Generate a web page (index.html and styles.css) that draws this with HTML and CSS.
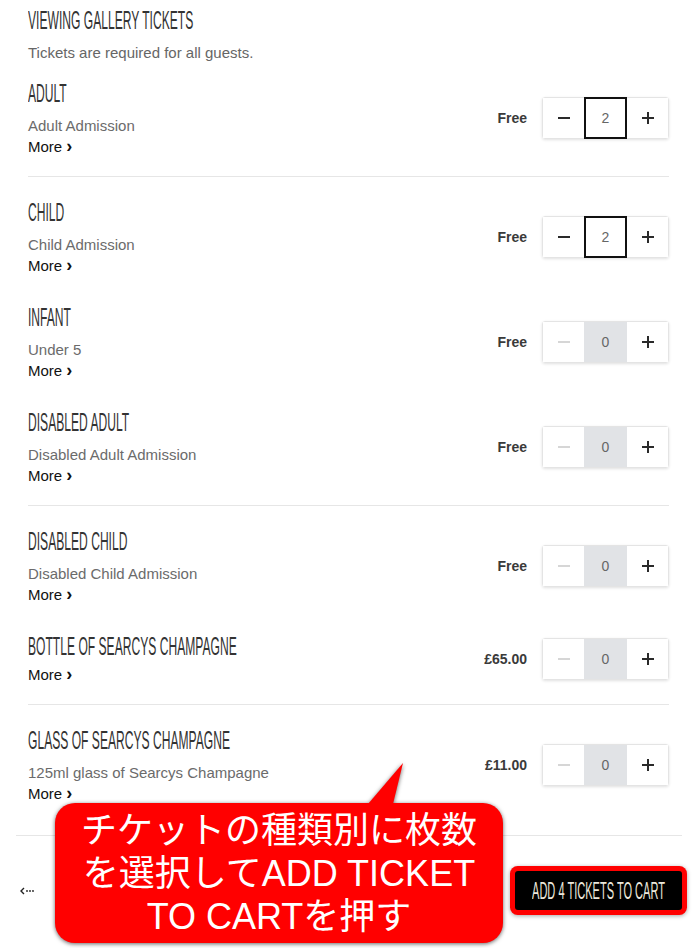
FILE: index.html
```html
<!DOCTYPE html>
<html lang="en">
<head>
    <meta charset="UTF-8">
    <meta name="viewport" content="width=device-width, initial-scale=1.0">
    <title>Viewing Gallery Tickets</title>
    <link rel="stylesheet" href="styles.css">
</head>
<body>
    <div class="page">
        <div class="tickets">
            <h1 class="title"><span>VIEWING GALLERY TICKETS</span></h1>
            <p class="intro">Tickets are required for all guests.</p>

            <div class="item">
                <div class="info">
                    <h2 class="title"><span>ADULT</span></h2>
                    <p class="desc">Adult Admission</p>
                    <a class="more">More <b>&#8250;</b></a>
                </div>
                <span class="price">Free</span>
                <div class="stepper">
                    <button class="step"><svg width="12" height="12" viewBox="0 0 12 12"><path d="M0 6h12" stroke="currentColor" stroke-width="2"/></svg></button>
                    <span class="count active">2</span>
                    <button class="step"><svg width="12" height="12" viewBox="0 0 12 12"><path d="M0 6h12M6 0v12" stroke="currentColor" stroke-width="2"/></svg></button>
                </div>
            </div>
            <hr class="divider">

            <div class="item">
                <div class="info">
                    <h2 class="title"><span>CHILD</span></h2>
                    <p class="desc">Child Admission</p>
                    <a class="more">More <b>&#8250;</b></a>
                </div>
                <span class="price">Free</span>
                <div class="stepper">
                    <button class="step"><svg width="12" height="12" viewBox="0 0 12 12"><path d="M0 6h12" stroke="currentColor" stroke-width="2"/></svg></button>
                    <span class="count active">2</span>
                    <button class="step"><svg width="12" height="12" viewBox="0 0 12 12"><path d="M0 6h12M6 0v12" stroke="currentColor" stroke-width="2"/></svg></button>
                </div>
            </div>

            <div class="item">
                <div class="info">
                    <h2 class="title"><span>INFANT</span></h2>
                    <p class="desc">Under 5</p>
                    <a class="more">More <b>&#8250;</b></a>
                </div>
                <span class="price">Free</span>
                <div class="stepper">
                    <button class="step off"><svg width="12" height="12" viewBox="0 0 12 12"><path d="M0 6h12" stroke="currentColor" stroke-width="2"/></svg></button>
                    <span class="count">0</span>
                    <button class="step"><svg width="12" height="12" viewBox="0 0 12 12"><path d="M0 6h12M6 0v12" stroke="currentColor" stroke-width="2"/></svg></button>
                </div>
            </div>

            <div class="item">
                <div class="info">
                    <h2 class="title"><span>DISABLED ADULT</span></h2>
                    <p class="desc">Disabled Adult Admission</p>
                    <a class="more">More <b>&#8250;</b></a>
                </div>
                <span class="price">Free</span>
                <div class="stepper">
                    <button class="step off"><svg width="12" height="12" viewBox="0 0 12 12"><path d="M0 6h12" stroke="currentColor" stroke-width="2"/></svg></button>
                    <span class="count">0</span>
                    <button class="step"><svg width="12" height="12" viewBox="0 0 12 12"><path d="M0 6h12M6 0v12" stroke="currentColor" stroke-width="2"/></svg></button>
                </div>
            </div>
            <hr class="divider">

            <div class="item">
                <div class="info">
                    <h2 class="title"><span>DISABLED CHILD</span></h2>
                    <p class="desc">Disabled Child Admission</p>
                    <a class="more">More <b>&#8250;</b></a>
                </div>
                <span class="price">Free</span>
                <div class="stepper">
                    <button class="step off"><svg width="12" height="12" viewBox="0 0 12 12"><path d="M0 6h12" stroke="currentColor" stroke-width="2"/></svg></button>
                    <span class="count">0</span>
                    <button class="step"><svg width="12" height="12" viewBox="0 0 12 12"><path d="M0 6h12M6 0v12" stroke="currentColor" stroke-width="2"/></svg></button>
                </div>
            </div>

            <div class="item">
                <div class="info">
                    <h2 class="title"><span>BOTTLE OF SEARCYS CHAMPAGNE</span></h2>
                    <a class="more short">More <b>&#8250;</b></a>
                </div>
                <span class="price">£65.00</span>
                <div class="stepper">
                    <button class="step off"><svg width="12" height="12" viewBox="0 0 12 12"><path d="M0 6h12" stroke="currentColor" stroke-width="2"/></svg></button>
                    <span class="count">0</span>
                    <button class="step"><svg width="12" height="12" viewBox="0 0 12 12"><path d="M0 6h12M6 0v12" stroke="currentColor" stroke-width="2"/></svg></button>
                </div>
            </div>
            <hr class="divider">

            <div class="item">
                <div class="info">
                    <h2 class="title"><span>GLASS OF SEARCYS CHAMPAGNE</span></h2>
                    <p class="desc">125ml glass of Searcys Champagne</p>
                    <a class="more">More <b>&#8250;</b></a>
                </div>
                <span class="price">£11.00</span>
                <div class="stepper">
                    <button class="step off"><svg width="12" height="12" viewBox="0 0 12 12"><path d="M0 6h12" stroke="currentColor" stroke-width="2"/></svg></button>
                    <span class="count">0</span>
                    <button class="step"><svg width="12" height="12" viewBox="0 0 12 12"><path d="M0 6h12M6 0v12" stroke="currentColor" stroke-width="2"/></svg></button>
                </div>
            </div>
        </div>

        <div class="footer">
            <a class="back">
                <svg width="16" height="8" viewBox="0 0 16 8"><path d="M4 1L1 4l3 3" fill="none" stroke="#222" stroke-width="1.4"/><circle cx="7" cy="4" r="0.9" fill="#222"/><circle cx="10" cy="4" r="0.9" fill="#222"/><circle cx="13" cy="4" r="0.9" fill="#222"/></svg>
            </a>
            <button class="cart"><span>ADD 4 TICKETS TO CART</span></button>
        </div>

        <div class="callout">
            <span class="line">チケットの種類別に枚数</span>
            <span class="line">を選択してADD TICKET</span>
            <span class="line">TO CARTを押す</span>
        </div>
    </div>
</body>
</html>
```

FILE: styles.css
```css
/* Global Styling */
body {
    margin: 0;
    background-color: #fff;
    font-family: "Liberation Sans", Arial, sans-serif;
    color: #333;
    overflow: hidden;
}

.page {
    position: relative;
    width: 700px;
    height: 948px;
}

/* Ticket list */
.tickets {
    padding: 6px 31px 0 28px;
}

.title {
    margin: 0;
    font-size: 26px;
    font-weight: normal;
    line-height: 28px;
    color: #333;
    white-space: nowrap;
}

.title span {
    display: inline-block;
    transform: scaleX(0.465);
    transform-origin: left center;
}

.intro {
    margin: 9px 0 3px;
    font-size: 15px;
    line-height: 20px;
    color: #666;
}

.item {
    display: flex;
    align-items: center;
    padding: 13px 0 14px;
}

.info {
    flex: 1;
}

.desc {
    margin: 8px 0 0;
    font-size: 15px;
    line-height: 21px;
    color: #6b6b6b;
}

.more {
    display: block;
    font-size: 15px;
    line-height: 21px;
    color: #111;
}

.more b {
    font-size: 18px;
    line-height: 14px;
}

.more.short {
    margin-top: 4px;
}

.price {
    margin-right: 15px;
    font-size: 14px;
    font-weight: bold;
    color: #3a3a3a;
}

/* Quantity stepper */
.stepper {
    display: grid;
    grid-template-columns: 41px 43px 41px;
    height: 40px;
    border: 1px solid #e4e4e4;
    border-radius: 3px;
    box-shadow: 0 1px 3px rgba(0, 0, 0, 0.12);
    margin: -1px 0;
}

.step {
    display: flex;
    align-items: center;
    justify-content: center;
    padding: 0;
    border: none;
    background: #fff;
    color: #2a2a2a;
}

.step.off {
    color: #d6d6d6;
}

.count {
    display: flex;
    align-items: center;
    justify-content: center;
    font-size: 14px;
    color: #666;
    background-color: #e1e3e6;
}

.count.active {
    background-color: #fff;
    border: 2px solid #111;
    margin: -1px 0;
}

.divider {
    margin: 5px 0 8px;
    border: none;
    border-top: 1px solid #e6e6e6;
}

/* Footer */
.footer {
    display: flex;
    align-items: center;
    justify-content: space-between;
    margin: 17px 18px 0 16px;
    padding: 35px 0 0 4px;
    border-top: 1px solid #e6e6e6;
}

.back {
    display: flex;
}

.cart {
    display: flex;
    align-items: center;
    justify-content: center;
    width: 167px;
    height: 39px;
    padding: 0;
    border: none;
    border-radius: 3px;
    background-color: #000;
    box-shadow: 0 0 0 5px #f00, 0 1px 4px 5px rgba(0, 0, 0, 0.35);
    color: #ece8dc;
    font-family: "Liberation Sans", Arial, sans-serif;
    font-size: 24px;
    white-space: nowrap;
    overflow: hidden;
}

.cart span {
    flex: none;
    transform: scaleX(0.46);
}

/* Annotation bubble */
.callout {
    position: absolute;
    left: 55px;
    top: 803px;
    width: 448px;
    height: 140px;
    box-sizing: border-box;
    padding-top: 6px;
    background-color: #f00;
    border-radius: 20px;
    filter: drop-shadow(0 1px 2px rgba(0, 0, 0, 0.6));
    color: #fff;
    font-family: "Liberation Sans", "Noto Sans CJK JP", sans-serif;
    font-size: 36px;
    line-height: 43px;
    text-align: center;
}

.callout::before {
    content: "";
    position: absolute;
    left: 313px;
    top: -40px;
    width: 35px;
    height: 41px;
    background-color: #f00;
    clip-path: polygon(0 100%, 25px 100%, 35px 0);
}

.callout .line {
    display: block;
    white-space: nowrap;
}
```
